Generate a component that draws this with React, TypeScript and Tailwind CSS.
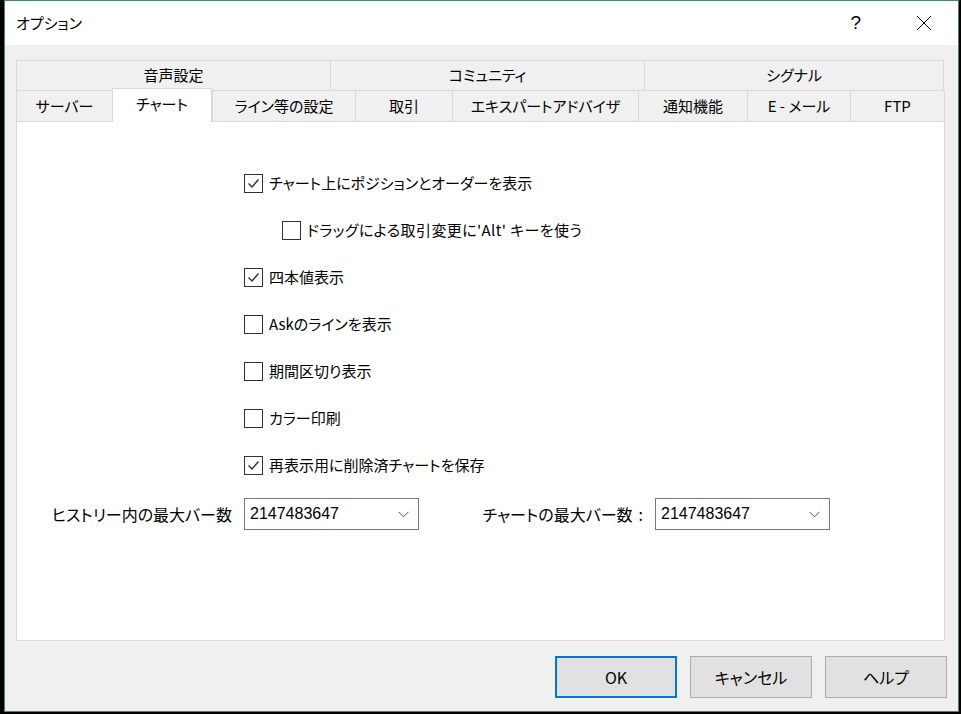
import React from "react";

const font = "font-['Noto_Sans_CJK_JP','Noto_Sans',sans-serif] [font-feature-settings:'palt']";

const topTabs = [
    { label: "音声設定", w: "w-[314px]" },
    { label: "コミュニティ", w: "w-[314px]" },
    { label: "シグナル", w: "w-[300px]" },
];

const bottomTabs = [
    { label: "サーバー", w: "w-[96px]" },
    { label: "チャート", w: "w-[100px]", active: true },
    { label: "ライン等の設定", w: "w-[143px]" },
    { label: "取引", w: "w-[97px]" },
    { label: "エキスパートアドバイザ", w: "w-[186px]" },
    { label: "通知機能", w: "w-[109px]" },
    { label: "E - メール", w: "w-[103px]" },
    { label: "FTP", w: "w-[95px]" },
];

const options = [
    { label: "チャート上にポジションとオーダーを表示", checked: true },
    { label: "ドラッグによる取引変更に'Alt' キーを使う", checked: false, indent: true },
    { label: "四本値表示", checked: true },
    { label: "Askのラインを表示", checked: false },
    { label: "期間区切り表示", checked: false },
    { label: "カラー印刷", checked: false },
    { label: "再表示用に削除済チャートを保存", checked: true },
];

function CheckBox({ checked }: { checked: boolean }) {
    return (
        <div className="w-[19px] h-[19px] border border-[#333333] bg-white flex items-center justify-center shrink-0">
            {checked && (
                <svg width="13" height="13" viewBox="0 0 13 13">
                    <polyline points="1.5,6.5 5,10 11.5,2.5" fill="none" stroke="#333333" strokeWidth="1.4" />
                </svg>
            )}
        </div>
    );
}

function Combo({ value }: { value: string }) {
    return (
        <div className="w-[175px] h-[32px] border border-[#7a7a7a] bg-white flex items-center justify-between pl-[5px] pr-[9px]">
            <span className="text-[16px] font-['Liberation_Sans',sans-serif] text-black">{value}</span>
            <svg width="11" height="7" viewBox="0 0 11 7">
                <polyline points="0.5,0.8 5.5,5.8 10.5,0.8" fill="none" stroke="#505050" strokeWidth="1" />
            </svg>
        </div>
    );
}

export default function App() {
    return (
        <div className={`w-[961px] h-[714px] bg-black pl-[4px] ${font}`}>
            <div className="w-[955px] h-[712px] border border-[#4f7f76] flex flex-col bg-[#f0f0f0]">
                {/* title bar */}
                <div className="h-[44px] bg-white flex items-center shrink-0">
                    <span className="ml-[11px] text-[15px] text-black">オプション</span>
                    <span className="ml-auto text-[19px] text-black font-['Liberation_Sans',sans-serif]">?</span>
                    <div className="ml-[55px] mr-[26px] w-[16px] h-[16px] flex items-center justify-center">
                        <svg width="16" height="16" viewBox="0 0 16 16">
                            <line x1="1" y1="1" x2="15" y2="15" stroke="#000" strokeWidth="1" />
                            <line x1="15" y1="1" x2="1" y2="15" stroke="#000" strokeWidth="1" />
                        </svg>
                    </div>
                </div>

                <div className="flex-1 flex flex-col pl-[11px] pr-[12px] pt-[15px] pb-[13px]">
                    {/* tabs */}
                    <div className="flex h-[30px]">
                        {topTabs.map((t, i) => (
                            <div
                                key={t.label}
                                className={`${t.w} h-full border-t border-l border-[#d9d9d9] ${i === topTabs.length - 1 ? "border-r" : ""} flex items-center justify-center text-[15px] text-black`}
                            >
                                {t.label}
                            </div>
                        ))}
                    </div>
                    <div className="flex h-[31px] items-end">
                        {bottomTabs.map((t, i) => (
                            <div
                                key={t.label}
                                className={
                                    t.active
                                        ? `${t.w} h-[34px] -mb-px relative z-10 bg-white border-t border-l border-r border-[#d9d9d9] flex items-center justify-center pb-[3px] text-[15px] text-black`
                                        : `${t.w} h-full border-t border-l border-[#d9d9d9] ${i === bottomTabs.length - 1 ? "border-r" : ""} flex items-center justify-center text-[15px] text-black`
                                }
                            >
                                {t.label}
                            </div>
                        ))}
                    </div>

                    {/* panel */}
                    <div className="w-[929px] h-[520px] bg-white border border-[#d9d9d9] flex flex-col pt-[38px]">
                        <div className="flex flex-col pl-[227px]">
                            {options.map((o) => (
                                <div key={o.label} className={`h-[47px] flex items-center gap-[6px] text-[15px] text-black ${o.indent ? "pl-[38px]" : ""}`}>
                                    <CheckBox checked={o.checked} />
                                    <span className={o.indent ? "tracking-[0.4px]" : ""}>{o.label}</span>
                                </div>
                            ))}
                        </div>
                        <div className="flex items-center mt-[9px] text-[16px] text-black">
                            <div className="w-[215px] text-right">ヒストリー内の最大バー数</div>
                            <div className="ml-[12px]">
                                <Combo value="2147483647" />
                            </div>
                            <div className="w-[227px] text-right">
                                チャートの最大バー数<span className="pl-[6px] pr-[3px]">:</span>
                            </div>
                            <div className="ml-[9px]">
                                <Combo value="2147483647" />
                            </div>
                        </div>
                    </div>

                    {/* buttons */}
                    <div className="flex justify-end gap-[13px] mt-auto">
                        <button className="w-[122px] h-[42px] bg-[#e1e1e1] border-2 border-[#0078d7] text-[16px] text-black">OK</button>
                        <button className="w-[122px] h-[42px] bg-[#e1e1e1] border border-[#adadad] text-[16px] text-black">キャンセル</button>
                        <button className="w-[122px] h-[42px] bg-[#e1e1e1] border border-[#adadad] text-[16px] text-black -mr-px">ヘルプ</button>
                    </div>
                </div>
            </div>
        </div>
    );
}
